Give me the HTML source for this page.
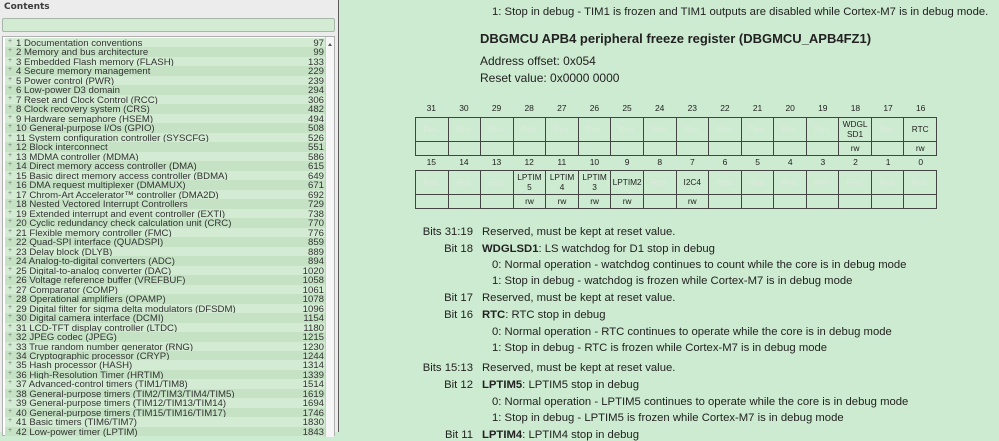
<!DOCTYPE html>
<html><head><meta charset="utf-8"><style>
*{margin:0;padding:0;box-sizing:border-box}
body{width:999px;height:432px;overflow:hidden;background:#cdebd0;font-family:"Liberation Sans",sans-serif;position:relative}
#left{position:absolute;left:0;top:0;width:339px;height:432px;background:#ececec;border-right:1px solid #5a5a5a}
#left .t{position:absolute;left:4px;top:2px;font:bold 9px "DejaVu Sans",sans-serif;color:#3c3c3c}
#left .s{position:absolute;left:2px;top:18px;width:333px;height:14px;background:#d3ebd2;border:1px solid #a8b8a8;border-radius:2px}
#list{position:absolute;left:2px;top:36px;width:333px;height:400px;border:1px solid #b0b0b0;background:#fff}
#rows{position:absolute;left:2px;top:1px;width:320px}
.r{height:9.49px;line-height:9.5px;font:9.6px "Liberation Sans",sans-serif;color:#333;white-space:nowrap;position:relative;padding-left:11px}
.r:nth-child(odd){background:#d3ebd2}.r:nth-child(even){background:#c5e2c5}
.r:before{content:"+";position:absolute;left:3px;font-size:7px;color:#777}
.r b{font-weight:normal;position:absolute;right:1px;top:0}
#sb{position:absolute;right:0;top:0;width:9px;height:400px;background:#f6f6f6;border-left:1px solid #ccc}
#sb:before{content:"";position:absolute;left:2px;top:4px;border:2.5px solid transparent;border-bottom:3px solid #555}
.a{position:absolute;font-size:11.3px;color:#222;white-space:nowrap}
.l{position:absolute;font-size:11.3px;color:#222;white-space:nowrap;width:60px;left:413px;text-align:right}
.nums{position:absolute;left:415px;width:522px;display:flex}
.n{font-size:8.5px;color:#222;text-align:center;flex:1}
table{position:absolute;border-collapse:collapse;left:415px;width:522px;table-layout:fixed}
td{border:1px solid #444;font-size:8.3px;text-align:center;color:#222;line-height:9.5px;padding:0}
td.res{color:#dde9dd}
</style></head><body>
<div id="left"><div class="t">Contents</div><div class="s"></div>
<div id="list"><div id="rows">
<div class="r">1 Documentation conventions<b>97</b></div>
<div class="r">2 Memory and bus architecture<b>99</b></div>
<div class="r">3 Embedded Flash memory (FLASH)<b>133</b></div>
<div class="r">4 Secure memory management<b>229</b></div>
<div class="r">5 Power control (PWR)<b>239</b></div>
<div class="r">6 Low-power D3 domain<b>294</b></div>
<div class="r">7 Reset and Clock Control (RCC)<b>306</b></div>
<div class="r">8 Clock recovery system (CRS)<b>482</b></div>
<div class="r">9 Hardware semaphore (HSEM)<b>494</b></div>
<div class="r">10 General-purpose I/Os (GPIO)<b>508</b></div>
<div class="r">11 System configuration controller (SYSCFG)<b>526</b></div>
<div class="r">12 Block interconnect<b>551</b></div>
<div class="r">13 MDMA controller (MDMA)<b>586</b></div>
<div class="r">14 Direct memory access controller (DMA)<b>615</b></div>
<div class="r">15 Basic direct memory access controller (BDMA)<b>649</b></div>
<div class="r">16 DMA request multiplexer (DMAMUX)<b>671</b></div>
<div class="r">17 Chrom-Art Accelerator™ controller (DMA2D)<b>692</b></div>
<div class="r">18 Nested Vectored Interrupt Controllers<b>729</b></div>
<div class="r">19 Extended interrupt and event controller (EXTI)<b>738</b></div>
<div class="r">20 Cyclic redundancy check calculation unit (CRC)<b>770</b></div>
<div class="r">21 Flexible memory controller (FMC)<b>776</b></div>
<div class="r">22 Quad-SPI interface (QUADSPI)<b>859</b></div>
<div class="r">23 Delay block (DLYB)<b>889</b></div>
<div class="r">24 Analog-to-digital converters (ADC)<b>894</b></div>
<div class="r">25 Digital-to-analog converter (DAC)<b>1020</b></div>
<div class="r">26 Voltage reference buffer (VREFBUF)<b>1058</b></div>
<div class="r">27 Comparator (COMP)<b>1061</b></div>
<div class="r">28 Operational amplifiers (OPAMP)<b>1078</b></div>
<div class="r">29 Digital filter for sigma delta modulators (DFSDM)<b>1096</b></div>
<div class="r">30 Digital camera interface (DCMI)<b>1154</b></div>
<div class="r">31 LCD-TFT display controller (LTDC)<b>1180</b></div>
<div class="r">32 JPEG codec (JPEG)<b>1215</b></div>
<div class="r">33 True random number generator (RNG)<b>1230</b></div>
<div class="r">34 Cryptographic processor (CRYP)<b>1244</b></div>
<div class="r">35 Hash processor (HASH)<b>1314</b></div>
<div class="r">36 High-Resolution Timer (HRTIM)<b>1339</b></div>
<div class="r">37 Advanced-control timers (TIM1/TIM8)<b>1514</b></div>
<div class="r">38 General-purpose timers (TIM2/TIM3/TIM4/TIM5)<b>1619</b></div>
<div class="r">39 General-purpose timers (TIM12/TIM13/TIM14)<b>1694</b></div>
<div class="r">40 General-purpose timers (TIM15/TIM16/TIM17)<b>1746</b></div>
<div class="r">41 Basic timers (TIM6/TIM7)<b>1830</b></div>
<div class="r">42 Low-power timer (LPTIM)<b>1843</b></div>
</div><div id="sb"></div></div></div>

<div class="a" style="left:492px;top:6px">1: Stop in debug - TIM1 is frozen and TIM1 outputs are disabled while Cortex-M7 is in debug mode.</div>
<div class="a" style="left:480px;top:31px;font-size:13px;font-weight:bold">DBGMCU APB4 peripheral freeze register (DBGMCU_APB4FZ1)</div>
<div class="a" style="left:480px;top:54px;font-size:12px">Address offset: 0x054</div>
<div class="a" style="left:480px;top:71px;font-size:12px">Reset value: 0x0000 0000</div>

<div class="nums" style="top:103px">
<div class="n">31</div><div class="n">30</div><div class="n">29</div><div class="n">28</div><div class="n">27</div><div class="n">26</div><div class="n">25</div><div class="n">24</div><div class="n">23</div><div class="n">22</div><div class="n">21</div><div class="n">20</div><div class="n">19</div><div class="n">18</div><div class="n">17</div><div class="n">16</div></div>
<table style="top:117px">
<tr style="height:24px"><td class="res">Res.</td><td class="res">Res.</td><td class="res">Res.</td><td class="res">Res.</td><td class="res">Res.</td><td class="res">Res.</td><td class="res">Res.</td><td class="res">Res.</td><td class="res">Res.</td><td class="res">Res.</td><td class="res">Res.</td><td class="res">Res.</td><td class="res">Res.</td><td>WDGL<br>SD1</td><td class="res">Res.</td><td>RTC</td></tr>
<tr style="height:14px"><td></td><td></td><td></td><td></td><td></td><td></td><td></td><td></td><td></td><td></td><td></td><td></td><td></td><td>rw</td><td></td><td>rw</td></tr></table>
<div class="nums" style="top:157px">
<div class="n">15</div><div class="n">14</div><div class="n">13</div><div class="n">12</div><div class="n">11</div><div class="n">10</div><div class="n">9</div><div class="n">8</div><div class="n">7</div><div class="n">6</div><div class="n">5</div><div class="n">4</div><div class="n">3</div><div class="n">2</div><div class="n">1</div><div class="n">0</div></div>
<table style="top:170px">
<tr style="height:24px"><td class="res">Res.</td><td class="res">Res.</td><td class="res">Res.</td><td>LPTIM<br>5</td><td>LPTIM<br>4</td><td>LPTIM<br>3</td><td>LPTIM2</td><td class="res">Res.</td><td>I2C4</td><td class="res">Res.</td><td class="res">Res.</td><td class="res">Res.</td><td class="res">Res.</td><td class="res">Res.</td><td class="res">Res.</td><td class="res">Res.</td></tr>
<tr style="height:14px"><td></td><td></td><td></td><td>rw</td><td>rw</td><td>rw</td><td>rw</td><td></td><td>rw</td><td></td><td></td><td></td><td></td><td></td><td></td><td></td></tr></table>

<div class="l" style="top:226px">Bits 31:19</div><div class="a" style="left:482px;top:226px">Reserved, must be kept at reset value.</div>
<div class="l" style="top:243px">Bit 18</div><div class="a" style="left:482px;top:243px"><b>WDGLSD1</b>: LS watchdog for D1 stop in debug</div>
<div class="a" style="left:492px;top:259px">0: Normal operation - watchdog continues to count while the core is in debug mode</div>
<div class="a" style="left:492px;top:275px">1: Stop in debug - watchdog is frozen while Cortex-M7 is in debug mode</div>
<div class="l" style="top:292px">Bit 17</div><div class="a" style="left:482px;top:292px">Reserved, must be kept at reset value.</div>
<div class="l" style="top:309px">Bit 16</div><div class="a" style="left:482px;top:309px"><b>RTC</b>: RTC stop in debug</div>
<div class="a" style="left:492px;top:326px">0: Normal operation - RTC continues to operate while the core is in debug mode</div>
<div class="a" style="left:492px;top:342px">1: Stop in debug - RTC is frozen while Cortex-M7 is in debug mode</div>
<div class="l" style="top:362px">Bits 15:13</div><div class="a" style="left:482px;top:362px">Reserved, must be kept at reset value.</div>
<div class="l" style="top:379px">Bit 12</div><div class="a" style="left:482px;top:379px"><b>LPTIM5</b>: LPTIM5 stop in debug</div>
<div class="a" style="left:492px;top:396px">0: Normal operation - LPTIM5 continues to operate while the core is in debug mode</div>
<div class="a" style="left:492px;top:412px">1: Stop in debug - LPTIM5 is frozen while Cortex-M7 is in debug mode</div>
<div class="l" style="top:429px">Bit 11</div><div class="a" style="left:482px;top:429px"><b>LPTIM4</b>: LPTIM4 stop in debug</div>
</body></html>
